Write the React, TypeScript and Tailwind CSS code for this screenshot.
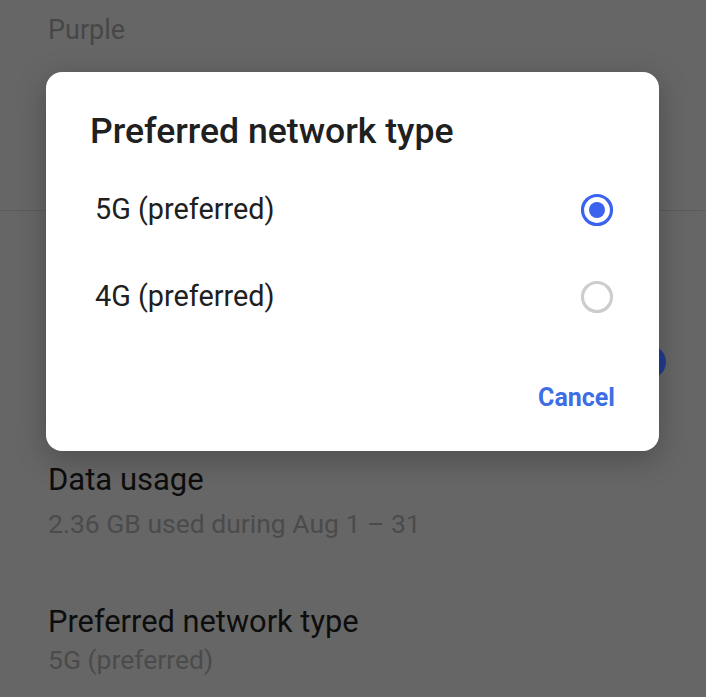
const Radio = ({ checked }: { checked: boolean }) => (
  <svg width="34" height="34" viewBox="0 0 34 34">
    <circle cx="17" cy="17" r="14.5" fill="none" stroke={checked ? "#3b63f0" : "#cdcdcd"} strokeWidth="3.2" />
    {checked && <circle cx="17" cy="17" r="8" fill="#3b63f0" />}
  </svg>
);

const options = [
  { label: "5G (preferred)", checked: true },
  { label: "4G (preferred)", checked: false },
];

export default function App() {
  return (
    <div className="relative h-[697px] w-[706px] overflow-hidden bg-[#666666] font-['Roboto',sans-serif]">
      {/* settings list behind the scrim */}
      <div className="flex flex-col">
        <div className="h-[210px] pl-12 pt-[14px] text-[27px] leading-[32px] text-[#474747]">Purple</div>
        <div className="h-px bg-[#5b5b5b]" />
        <div className="flex h-[240px] items-center justify-end pr-[50px] pt-[62px]">
          <div className="relative flex h-[18px] w-[56px] items-center rounded-full bg-[#2a3b70]">
            <div className="absolute right-[-10px] h-[34px] w-[34px] rounded-full bg-[#213c8e]" />
          </div>
        </div>
        <div className="flex flex-col pl-12 pt-[11px]">
          <div className="text-[31px] leading-[36px] text-[#0d0d0d]">Data usage</div>
          <div className="mt-[10px] text-[26.5px] leading-[32px] text-[#4b4b4b]">2.36 GB used during Aug 1 – 31</div>
        </div>
        <div className="flex flex-col pl-12 pt-[64px]">
          <div className="text-[30.8px] leading-[36px] text-[#0d0d0d]">Preferred network type</div>
          <div className="mt-[4px] text-[26.5px] leading-[32px] text-[#4b4b4b]">5G (preferred)</div>
        </div>
      </div>

      {/* dialog */}
      <div className="absolute left-[46px] top-[72px] flex h-[379px] w-[613px] flex-col rounded-[16px] bg-white shadow-[0_8px_30px_rgba(0,0,0,0.25)]">
        <div className="pl-[44px] pt-[40px] text-[35.6px] font-medium leading-[38px] text-[#202020]">Preferred network type</div>
        <div className="mt-[16px] flex flex-col">
          {options.map((o) => (
            <div key={o.label} className="flex h-[87px] items-center justify-between pl-[49px] pr-[45px]">
              <span className="text-[28.8px] text-[#202020]">{o.label}</span>
              <Radio checked={o.checked} />
            </div>
          ))}
        </div>
        <div className="flex justify-end pr-[44px] pt-[39px]">
          <span className="text-[25px] font-bold text-[#3d6ee6]">Cancel</span>
        </div>
      </div>
    </div>
  );
}
